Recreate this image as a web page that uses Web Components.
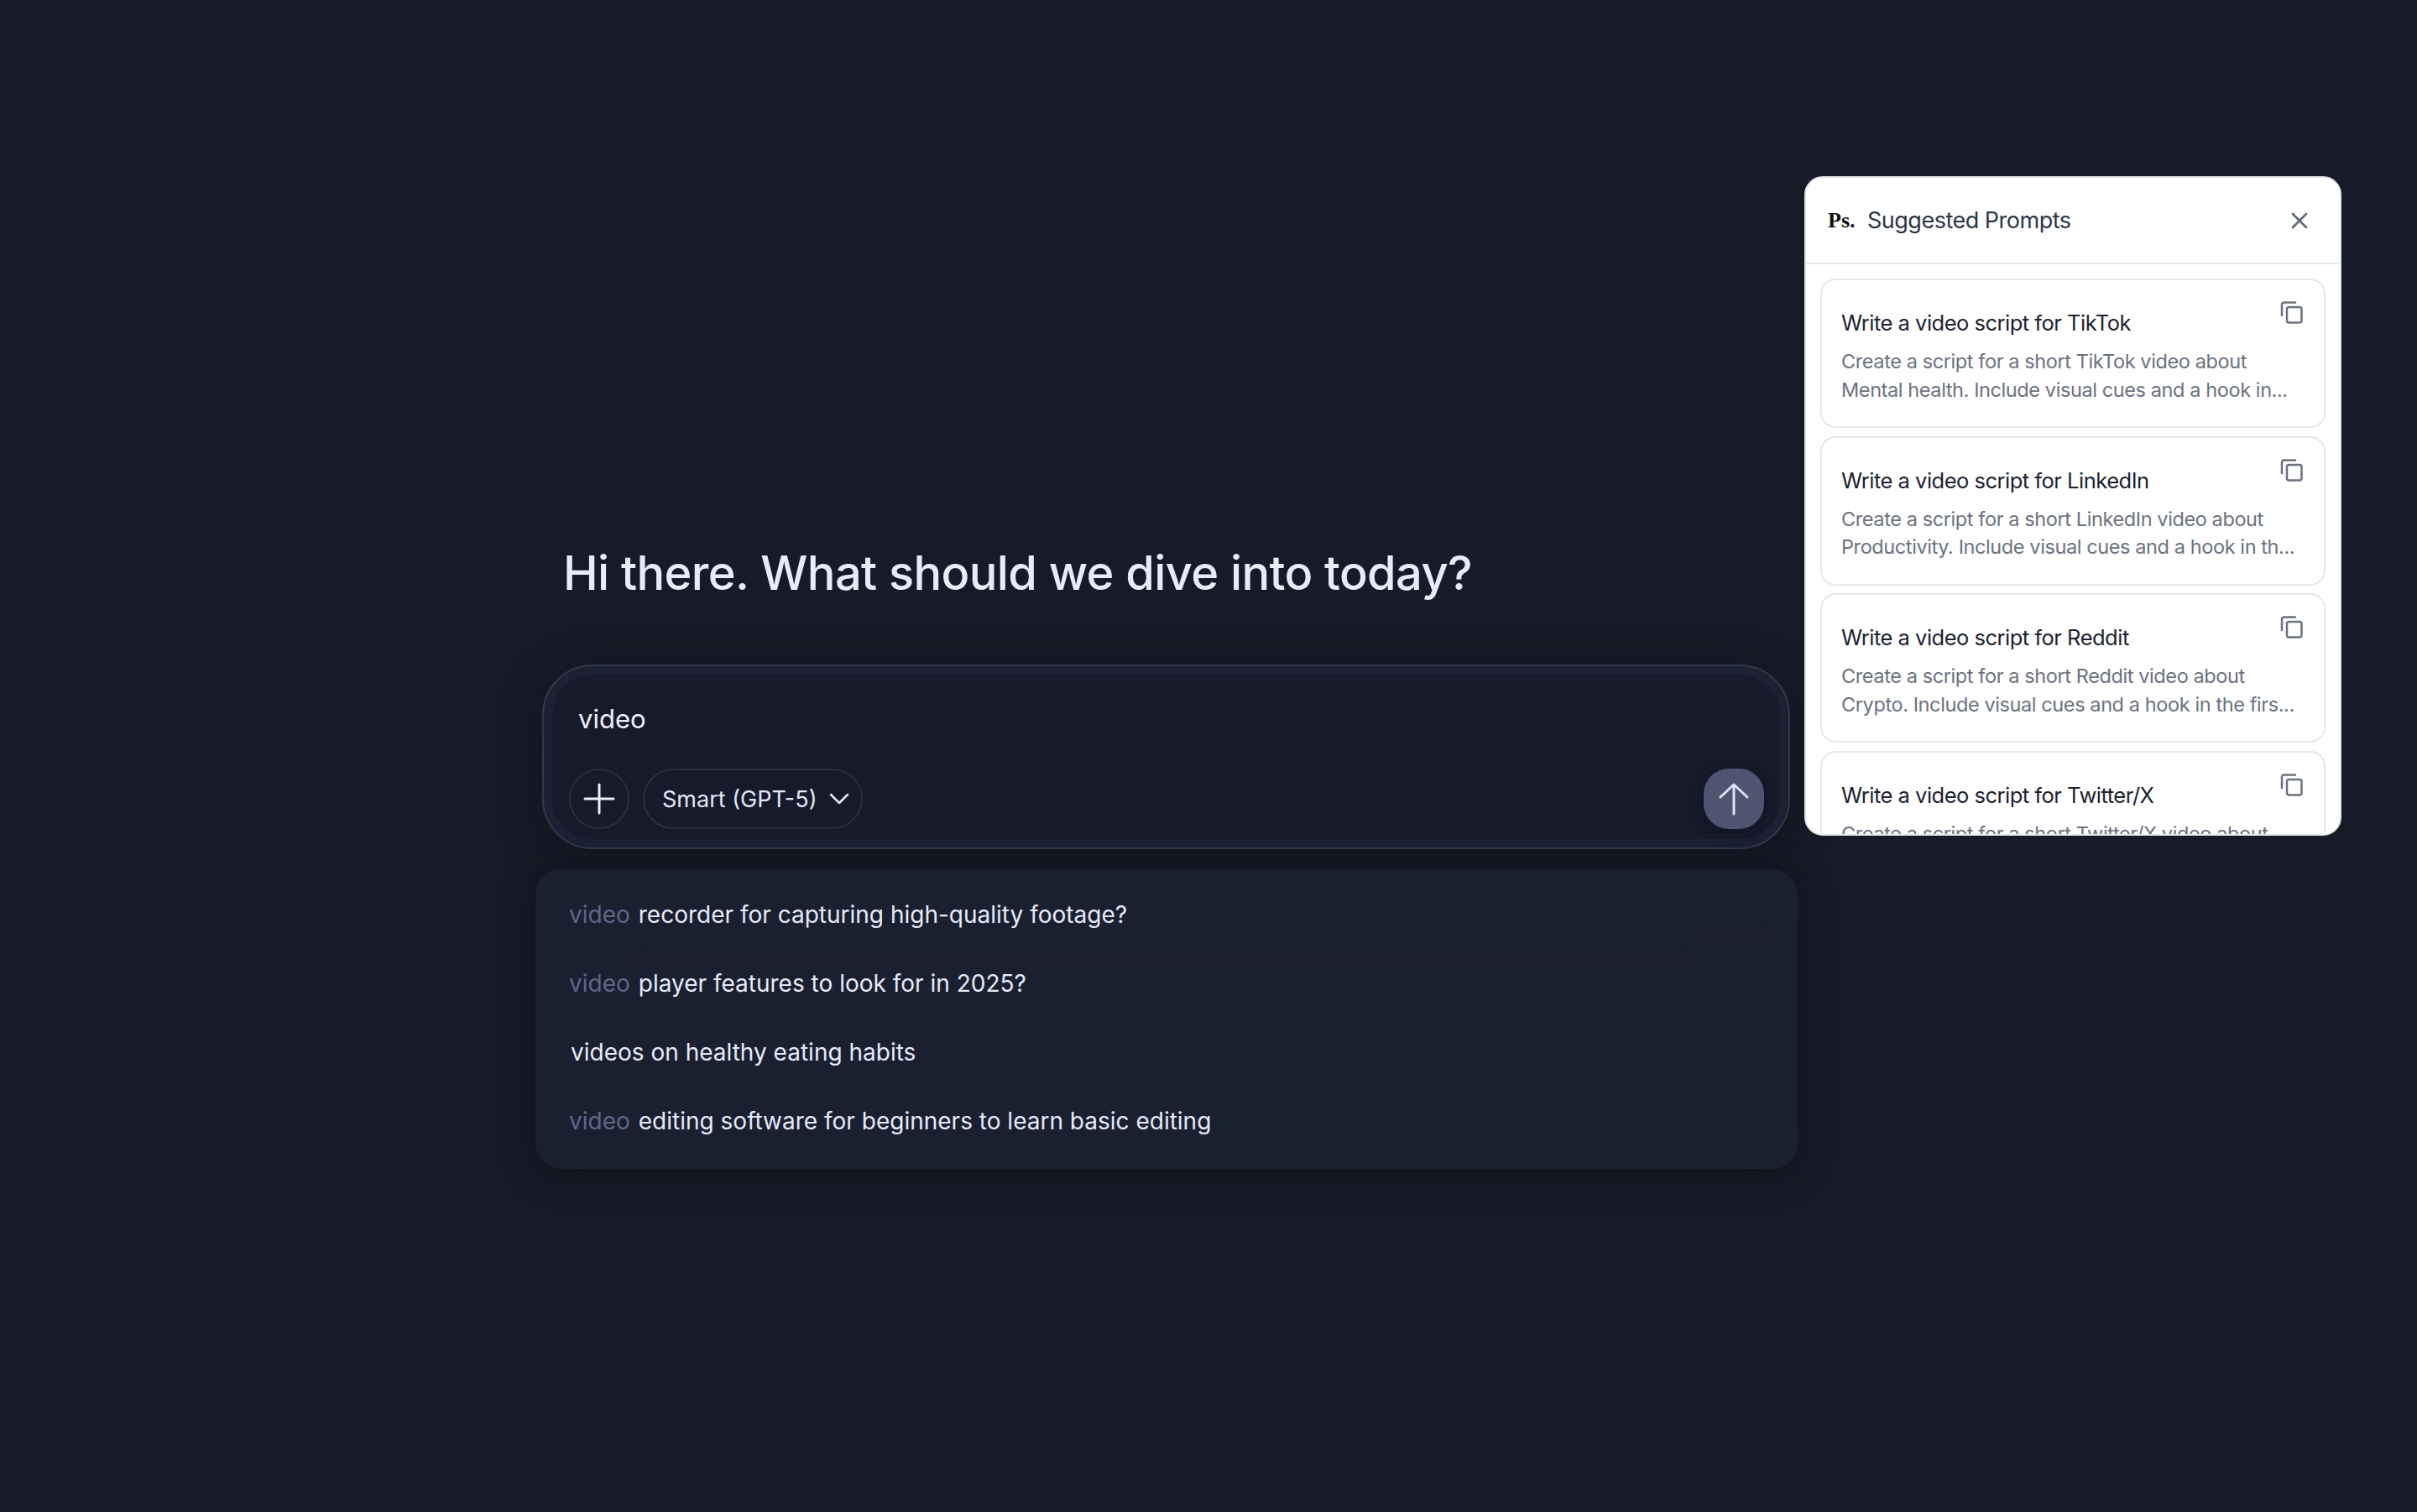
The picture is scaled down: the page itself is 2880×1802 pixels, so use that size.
<!DOCTYPE html>
<html lang="en">
<head>
<meta charset="utf-8">
<title>Chat</title>
<style>
  html, body { margin: 0; height: 100%; background: #171b27; overflow: hidden; }
  body { font-family: Inter, "Liberation Sans", sans-serif; }
</style>
</head>
<body>
<chat-page>
  <chat-heading>Hi there. What should we dive into today?</chat-heading>
  <chat-composer value="video" model="Smart (GPT-5)"></chat-composer>
  <suggest-list>
    <suggest-row prefix="video">recorder for capturing high-quality footage?</suggest-row>
    <suggest-row prefix="video">player features to look for in 2025?</suggest-row>
    <suggest-row>videos on healthy eating habits</suggest-row>
    <suggest-row prefix="video">editing software for beginners to learn basic editing</suggest-row>
  </suggest-list>
  <prompts-panel slot="panel">
    <prompt-card title="Write a video script for TikTok" line1="Create a script for a short TikTok video about" line2="Mental health. Include visual cues and a hook in..."></prompt-card>
    <prompt-card title="Write a video script for LinkedIn" line1="Create a script for a short LinkedIn video about" line2="Productivity. Include visual cues and a hook in th..."></prompt-card>
    <prompt-card title="Write a video script for Reddit" line1="Create a script for a short Reddit video about" line2="Crypto. Include visual cues and a hook in the firs..."></prompt-card>
    <prompt-card title="Write a video script for Twitter/X" line1="Create a script for a short Twitter/X video about" line2="Tech news. Include visual cues and a hook in the..."></prompt-card>
  </prompts-panel>
</chat-page>
<script>
class ChatPage extends HTMLElement {
  connectedCallback() {
    this.attachShadow({ mode: 'open' });
    this.shadowRoot.innerHTML = `
      <style>
        :host { display: block; position: relative; width: 2880px; height: 1802px; box-sizing: border-box; padding: 649px 738px 0 638px; }
        main { display: flex; flex-direction: column; }
      </style>
      <main><slot></slot></main>
      <slot name="panel"></slot>
    `;
  }
}

class ChatHeading extends HTMLElement {
  connectedCallback() {
    this.attachShadow({ mode: 'open' });
    this.shadowRoot.innerHTML = `
      <style>
        :host { display: block; padding-left: 33px; margin-bottom: 75px; font-size: 56px; line-height: 68px; font-weight: 500; color: #e8ecfa; letter-spacing: -0.6px; white-space: nowrap; }
      </style>
      <slot></slot>
    `;
  }
}

class ChatComposer extends HTMLElement {
  connectedCallback() {
    this.attachShadow({ mode: 'open' });
    this.shadowRoot.innerHTML = `
      <style>
        :host { display: block; box-sizing: border-box; height: 220px; margin: 0 9px 24px 8px; border: 2px solid #343949; border-radius: 60px; padding: 10px; background: #1c2234; box-shadow: 0 10px 50px rgba(8, 8, 16, .35); }
        .inner { box-sizing: border-box; height: 196px; border-radius: 48px; background: #161a2b; display: flex; flex-direction: column; padding: 0 19px 12px 20px; }
        .text { flex: 1; padding: 33px 0 0 11px; font-size: 31px; line-height: 40px; color: #eef0fa; }
        .controls { display: flex; align-items: center; gap: 16px; }
        .round { box-sizing: border-box; width: 72px; height: 72px; border: 2px solid #2a2e3e; border-radius: 50%; display: flex; align-items: center; justify-content: center; }
        .pill { box-sizing: border-box; height: 72px; width: 262px; border: 2px solid #2a2e3e; border-radius: 36px; display: flex; align-items: center; gap: 14px; padding-left: 21px; font-size: 27px; color: #e4e7f5; white-space: nowrap; }
        .send { margin-left: auto; width: 72px; height: 72px; border-radius: 30px; background: #4d5570; display: flex; align-items: center; justify-content: center; box-shadow: 0 4px 14px rgba(6, 8, 16, .35); }
        svg { display: block; fill: none; stroke-linecap: round; stroke-linejoin: round; }
      </style>
      <div class="inner">
        <div class="text">${this.getAttribute('value')}</div>
        <div class="controls">
          <div class="round">
            <svg width="38" height="38" viewBox="0 0 38 38" stroke="#eef0fa" stroke-width="3"><path d="M19 2v34M2 19h34"/></svg>
          </div>
          <div class="pill">
            <span>${this.getAttribute('model')}</span>
            <svg width="24" height="14" viewBox="0 0 24 14" stroke="#e4e7f5" stroke-width="2.5"><path d="M2 2l10 10L22 2"/></svg>
          </div>
          <div class="send">
            <svg width="36" height="40" viewBox="0 0 36 40" stroke="#dde1f0" stroke-width="3"><path d="M18 38V3M2 18L18 3l16 15"/></svg>
          </div>
        </div>
      </div>
    `;
  }
}

class SuggestList extends HTMLElement {
  connectedCallback() {
    this.attachShadow({ mode: 'open' });
    this.shadowRoot.innerHTML = `
      <style>
        :host { display: block; position: relative; box-sizing: border-box; height: 357px; padding: 13px 40px 16px; border-radius: 30px; background: #1b2030; box-shadow: 0 6px 40px rgba(8, 8, 16, .4); }
        .ghost { position: absolute; background: #1f2030; filter: blur(2px); }
        .a { left: 125px; right: 135px; top: 101px; height: 13px; }
        .b { left: 1390px; width: 72px; top: 72px; height: 12px; }
      </style>
      <div class="ghost a"></div>
      <div class="ghost b"></div>
      <slot></slot>
    `;
  }
}

class SuggestRow extends HTMLElement {
  connectedCallback() {
    this.attachShadow({ mode: 'open' });
    const prefix = this.getAttribute('prefix');
    this.shadowRoot.innerHTML = `
      <style>
        :host { display: flex; position: relative; align-items: center; gap: 10px; height: 82px; font-size: 28px; color: #e6eafa; white-space: nowrap; }
        .pre { color: #5f6788; }
        .plain { padding-left: 2px; }
      </style>
      ${prefix ? `<span class="pre">${prefix}</span>` : ''}
      <span class="${prefix ? '' : 'plain'}"><slot></slot></span>
    `;
  }
}

class PromptsPanel extends HTMLElement {
  connectedCallback() {
    this.attachShadow({ mode: 'open' });
    this.shadowRoot.innerHTML = `
      <style>
        :host { display: flex; flex-direction: column; position: absolute; left: 2150px; top: 210px; width: 640px; height: 786px; box-sizing: border-box; border: 2px solid #e5e7eb; border-radius: 22px; background: #fff; overflow: hidden; }
        header { flex: none; box-sizing: border-box; height: 103px; display: flex; align-items: center; padding: 0 38px 0 26px; border-bottom: 2px solid #e5e7eb; }
        .logo { font-family: "Liberation Serif", serif; font-weight: 700; font-size: 26px; color: #111; width: 47px; }
        .name { flex: 1; font-size: 27px; letter-spacing: -0.5px; color: #2d3548; }
        .list { flex: 1; min-height: 0; overflow: hidden; padding: 17px 17px 0; display: flex; flex-direction: column; gap: 9.5px; }
        svg { display: block; fill: none; stroke-linecap: round; stroke-linejoin: round; }
      </style>
      <header>
        <span class="logo">Ps.</span>
        <span class="name">Suggested Prompts</span>
        <svg width="20" height="20" viewBox="0 0 20 20" stroke="#5f6675" stroke-width="2.6"><path d="M2 2l16 16M18 2L2 18"/></svg>
      </header>
      <div class="list"><slot></slot></div>
    `;
  }
}

class PromptCard extends HTMLElement {
  connectedCallback() {
    this.attachShadow({ mode: 'open' });
    this.shadowRoot.innerHTML = `
      <style>
        :host { display: flex; flex: none; box-sizing: border-box; height: 178px; border: 2px solid #e5e7eb; border-radius: 18px; background: #fff; padding: 25px 25px 0 23px; }
        .body { flex: 1; min-width: 0; padding-top: 10px; }
        .title { font-size: 25.5px; line-height: 32px; letter-spacing: -0.5px; color: #1b2230; white-space: nowrap; }
        .desc { margin-top: 13px; font-size: 23.5px; line-height: 33.5px; letter-spacing: -0.4px; color: #6b7280; white-space: nowrap; }
        svg { display: block; flex: none; fill: none; stroke-linejoin: round; stroke-linecap: round; }
      </style>
      <div class="body">
        <div class="title">${this.getAttribute('title')}</div>
        <div class="desc">${this.getAttribute('line1')}<br>${this.getAttribute('line2')}</div>
      </div>
      <svg width="27" height="27" viewBox="0 0 27 27" stroke="#6b7280" stroke-width="2.5"><rect x="8" y="7" width="17.5" height="18.5" rx="2.5"/><path d="M2 17V4a2.5 2.5 0 0 1 2.5-2.5H18"/></svg>
    `;
  }
}

customElements.define('chat-page', ChatPage);
customElements.define('chat-heading', ChatHeading);
customElements.define('chat-composer', ChatComposer);
customElements.define('suggest-list', SuggestList);
customElements.define('suggest-row', SuggestRow);
customElements.define('prompts-panel', PromptsPanel);
customElements.define('prompt-card', PromptCard);
</script>
</body>
</html>
